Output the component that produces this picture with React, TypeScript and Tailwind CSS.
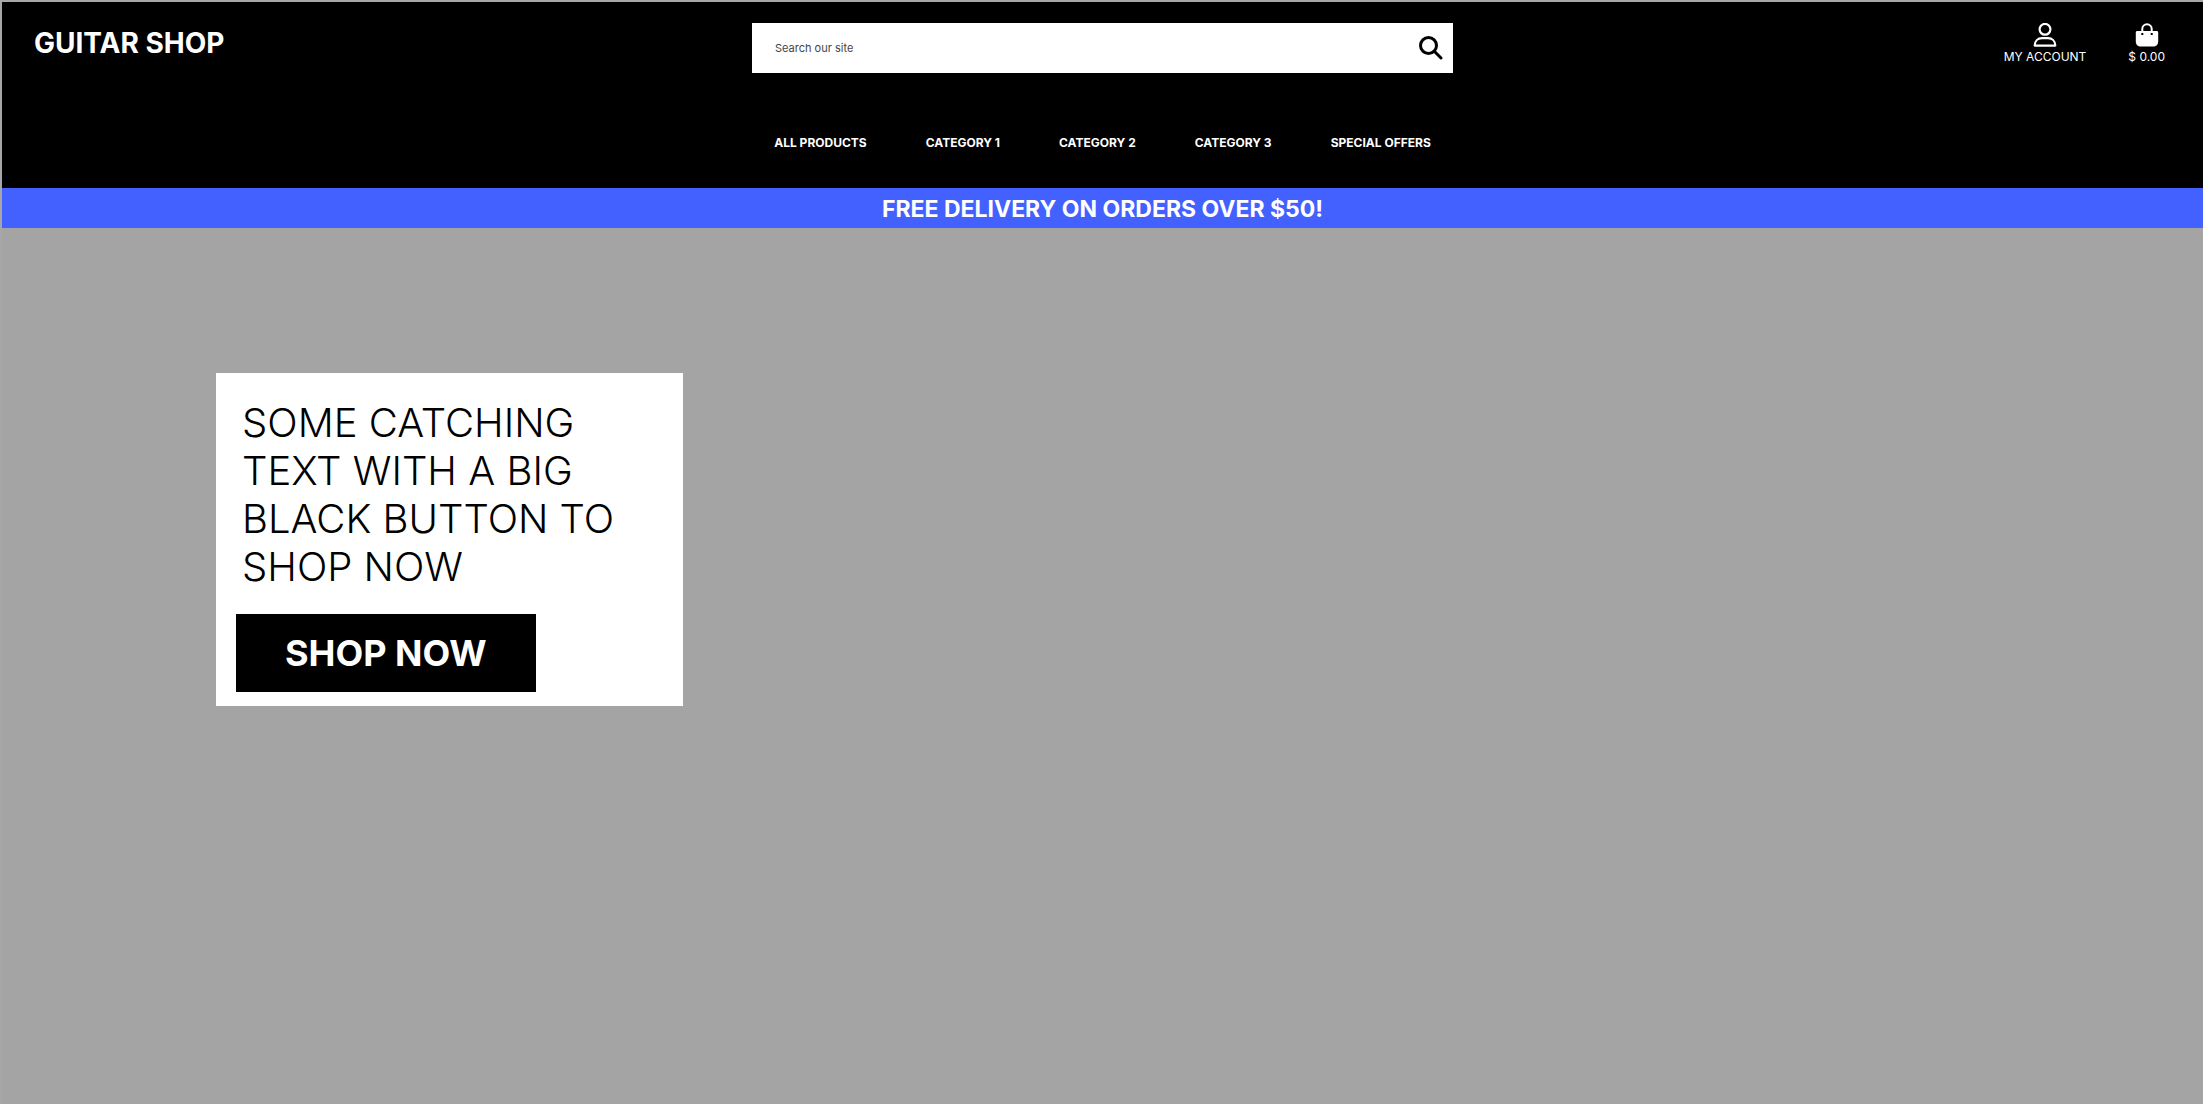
const navItems = ["ALL PRODUCTS", "CATEGORY 1", "CATEGORY 2", "CATEGORY 3", "SPECIAL OFFERS"];

function SearchIcon() {
  return (
    <svg width="24" height="24" viewBox="0 0 24 24" fill="none" stroke="currentColor" strokeWidth="3" strokeLinecap="round" aria-hidden="true">
      <circle cx="9.5" cy="9.5" r="8" />
      <path d="M15.3 15.3 22 22" />
    </svg>
  );
}

function UserIcon() {
  return (
    <svg width="24" height="24" viewBox="0 0 24 24" fill="none" stroke="currentColor" strokeWidth="2.2" strokeLinejoin="round" aria-hidden="true">
      <circle cx="12" cy="6.3" r="5.4" />
      <path d="M1.7 22.6c0-4.6 3.2-7.4 7.3-7.4h6c4.1 0 7.3 2.8 7.3 7.4Z" />
    </svg>
  );
}

function BagIcon() {
  return (
    <svg width="24" height="24" viewBox="0 0 24 24" aria-hidden="true">
      <path d="M7.3 9V6a4.7 4.7 0 0 1 9.4 0v3" fill="none" stroke="currentColor" strokeWidth="2" />
      <path
        d="M2.2 8h19.6c.8 0 1.4.6 1.4 1.4v9.2c0 3-2 5-5 5H5.8c-3 0-5-2-5-5V9.4C.8 8.6 1.4 8 2.2 8ZM6.3 10v2h2v-2ZM15.7 10v2h2v-2Z"
        fill="currentColor"
        fillRule="evenodd"
      />
    </svg>
  );
}

export default function App() {
  return (
    <div className="flex min-h-screen flex-col border-t-2 border-l-2 border-[#a5a7a8] bg-[#a4a4a4] font-['Inter',sans-serif] text-black">
      <header className="flex flex-col bg-black text-white">
        <div className="grid grid-cols-[1fr_minmax(0,701px)_1fr] items-start pt-[21px]">
          <a href="#" className="justify-self-start pt-1 pl-8 text-[28px] leading-8 font-bold">
            GUITAR SHOP
          </a>
          <form role="search" className="flex h-[50px] items-center bg-white pr-2.5 pl-[23px] text-black">
            <input
              type="search"
              aria-label="Search our site"
              placeholder="Search our site"
              className="h-full min-w-0 flex-1 text-[11px] outline-none placeholder:text-[#444444]"
            />
            <button type="button" aria-label="Search">
              <SearchIcon />
            </button>
          </form>
          <div className="flex gap-[42px] justify-self-end pr-[38px] text-xs leading-4">
            <a href="#" className="flex flex-col items-center gap-0.5">
              <UserIcon />
              MY ACCOUNT
            </a>
            <a href="#" className="flex flex-col items-center gap-0.5">
              <BagIcon />$ 0.00
            </a>
          </div>
        </div>
        <nav className="flex justify-center gap-[59px] pt-[60px] pb-[35px] text-xs leading-5 font-bold">
          {navItems.map((item) => (
            <a key={item} href="#">
              {item}
            </a>
          ))}
        </nav>
      </header>
      <p className="bg-[#4361ff] pt-0.5 text-center text-[23px] leading-[38px] font-bold text-white">FREE DELIVERY ON ORDERS OVER $50!</p>
      <main className="flex-1 px-[214px] pt-[145px]">
        <section className="w-full max-w-[467px] bg-white px-5 pt-[26px] pb-3.5">
          <h1 className="mr-5 ml-1.5 text-[40px] leading-12 font-light">SOME CATCHING TEXT WITH A BIG BLACK BUTTON TO SHOP NOW</h1>
          <button type="button" className="mt-[23px] bg-black px-[49px] py-[15px] text-4xl leading-12 font-bold text-white">
            SHOP NOW
          </button>
        </section>
      </main>
    </div>
  );
}
